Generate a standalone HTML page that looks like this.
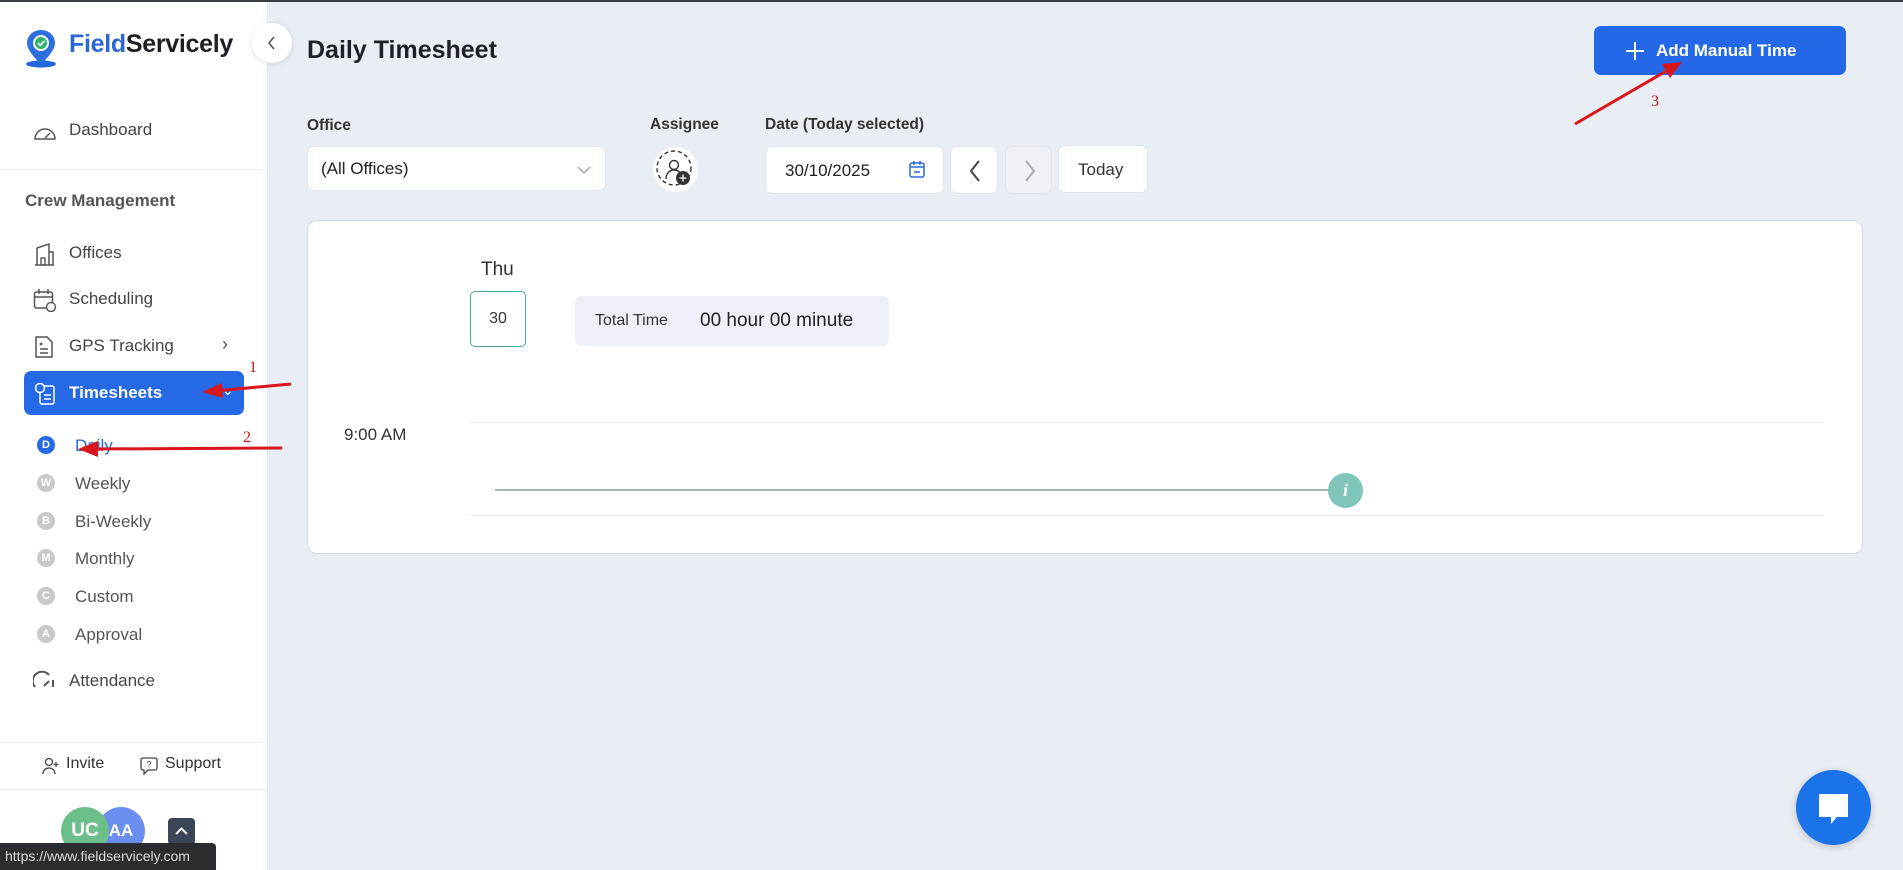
<!DOCTYPE html>
<html><head><meta charset="utf-8"><style>
*{box-sizing:border-box;margin:0;padding:0}
body{width:1903px;height:870px;overflow:hidden;background:#e9eef5;font-family:"Liberation Sans",sans-serif;position:relative;color:#222}
.abs{position:absolute}
#topbar{left:0;top:0;width:1903px;height:2px;background:#3a3d44}
#side{left:0;top:2px;width:268px;height:868px;background:#fff;border-right:1px solid #e3e8ee}
.nav{position:absolute;left:69px;font-size:17px;color:#444;white-space:nowrap}
.ic{position:absolute;left:33px}
.sub{position:absolute;left:75px;font-size:17px;color:#555}
.dot{position:absolute;left:37px;width:18px;height:18px;border-radius:50%;background:#c9c9cc;color:#fff;font-size:11px;font-weight:bold;text-align:center;line-height:18px}
.lbl{position:absolute;font-size:15.5px;color:#333;font-weight:bold}
.box{position:absolute;background:#fff;border:1px solid #e1e6ec;border-radius:7px}
</style></head><body>
<div id="topbar" class="abs"></div>
<div id="side" class="abs">
  <svg class="abs" style="left:24px;top:26px" width="34" height="40" viewBox="0 0 34 40">
    <ellipse cx="17" cy="36" rx="15" ry="3.5" fill="#2466db"/>
    <path d="M17 2C9 2 3 8 3 15c0 9 14 21 14 21s14-12 14-21C31 8 25 2 17 2z" fill="#2b6fe0"/>
    <circle cx="17" cy="15" r="8" fill="#fff"/><circle cx="17" cy="15" r="6" fill="#2fb36b"/>
    <path d="M14 15l2.2 2.2L20.5 13" stroke="#fff" stroke-width="1.8" fill="none"/>
  </svg>
  <div class="abs" style="left:69px;top:28px;font-size:25px;font-weight:bold;letter-spacing:-0.3px"><span style="color:#2b68d6">Field</span><span style="color:#1d1f24">Servicely</span></div>

  <svg class="ic" style="top:120px" width="24" height="20" viewBox="0 0 24 20"><path d="M2 17a10 10 0 0 1 20 0z" fill="none" stroke="#555" stroke-width="1.5"/><path d="M12 16l5-5" stroke="#555" stroke-width="1.5"/></svg>
  <div class="nav" style="top:118px">Dashboard</div>
  <div class="abs" style="left:0;top:167px;width:268px;height:1px;background:#e8ebef"></div>
  <div class="abs" style="left:25px;top:189px;font-size:17px;color:#555;font-weight:bold">Crew Management</div>

  <svg class="ic" style="top:240px" width="22" height="24" viewBox="0 0 22 24"><path d="M2 23h19M4 23V6l12-4v21M16 10h4v13" fill="none" stroke="#555" stroke-width="1.5"/><rect x="8" y="16" width="4" height="7" fill="none" stroke="#555" stroke-width="1.4"/></svg>
  <div class="nav" style="top:241px">Offices</div>
  <svg class="ic" style="top:286px" width="24" height="24" viewBox="0 0 24 24"><rect x="1.5" y="4" width="18" height="16" rx="2" fill="none" stroke="#555" stroke-width="1.5"/><path d="M1.5 9h18M6 1v5M15 1v5" stroke="#555" stroke-width="1.5"/><circle cx="18" cy="19" r="4.5" fill="#fff" stroke="#555" stroke-width="1.4"/></svg>
  <div class="nav" style="top:287px">Scheduling</div>
  <svg class="ic" style="top:333px" width="22" height="24" viewBox="0 0 22 24"><path d="M3 2h11l5 5v15H3z" fill="none" stroke="#555" stroke-width="1.5"/><path d="M7 14h8M7 18h8" stroke="#555" stroke-width="1.5"/><circle cx="8" cy="9" r="1.4" fill="#555"/></svg>
  <div class="nav" style="top:334px">GPS Tracking</div>
  <div class="abs" style="left:222px;top:332px;font-size:18px;color:#555">›</div>

  <div class="abs" style="left:24px;top:369px;width:220px;height:44px;background:#2569e6;border-radius:7px"></div>
  <svg class="abs" style="left:34px;top:380px" width="22" height="24" viewBox="0 0 22 24"><rect x="6" y="4" width="14" height="18" rx="2" fill="none" stroke="#fff" stroke-width="1.5"/><circle cx="6" cy="6" r="4.5" fill="#2569e6" stroke="#fff" stroke-width="1.5"/><path d="M10 13h7M10 17h7" stroke="#fff" stroke-width="1.5"/></svg>
  <div class="nav" style="top:381px;color:#fff;font-weight:bold">Timesheets</div>
  <div class="abs" style="left:222px;top:380px;font-size:14px;color:#fff">⌄</div>

  <div class="dot" style="top:434px;background:#2569e6">D</div><div class="sub" style="top:434px;color:#2b68d6">Daily</div>
  <div class="dot" style="top:472px">W</div><div class="sub" style="top:472px">Weekly</div>
  <div class="dot" style="top:510px">B</div><div class="sub" style="top:510px">Bi-Weekly</div>
  <div class="dot" style="top:547px">M</div><div class="sub" style="top:547px">Monthly</div>
  <div class="dot" style="top:585px">C</div><div class="sub" style="top:585px">Custom</div>
  <div class="dot" style="top:623px">A</div><div class="sub" style="top:623px">Approval</div>
  <svg class="ic" style="top:668px" width="22" height="20" viewBox="0 0 22 20"><path d="M2 17A9 9 0 0 1 16 5" fill="none" stroke="#555" stroke-width="2"/><path d="M20 10v7M11 16l5-5" stroke="#555" stroke-width="2"/></svg>
  <div class="nav" style="top:669px">Attendance</div>

  <div class="abs" style="left:0;top:740px;width:268px;height:1px;background:#eceff3;box-shadow:0 -2px 4px rgba(0,0,0,0.04)"></div>
  <svg class="abs" style="left:42px;top:755px" width="18" height="18" viewBox="0 0 18 18"><circle cx="7" cy="5" r="3.5" fill="none" stroke="#444" stroke-width="1.3"/><path d="M1 17c0-4 3-6 6-6s6 2 6 6M14 5v5M11.5 7.5h5" fill="none" stroke="#444" stroke-width="1.3"/></svg>
  <div class="abs" style="left:66px;top:753px;font-size:16px;color:#333">Invite</div>
  <svg class="abs" style="left:140px;top:754px" width="18" height="19" viewBox="0 0 18 19"><path d="M3 2h12a2 2 0 0 1 2 2v8a2 2 0 0 1-2 2H8l-4 4v-4H3a2 2 0 0 1-2-2V4a2 2 0 0 1 2-2z" fill="none" stroke="#444" stroke-width="1.3"/><text x="9" y="11.5" font-size="9" text-anchor="middle" fill="#444" font-family="Liberation Sans">?</text></svg>
  <div class="abs" style="left:165px;top:753px;font-size:16px;color:#333">Support</div>
  <div class="abs" style="left:0;top:787px;width:268px;height:1px;background:#eef1f4"></div>

  <div class="abs" style="left:97px;top:805px;width:48px;height:48px;border-radius:50%;background:#6b8ff0;color:#fff;font-weight:bold;font-size:17px;text-align:center;line-height:48px">AA</div>
  <div class="abs" style="left:61px;top:805px;width:48px;height:48px;border-radius:50%;background:#6cbf8a;color:#fff;font-weight:bold;font-size:19px;text-align:center;line-height:48px">UC</div>
  <div class="abs" style="left:168px;top:816px;width:27px;height:27px;border-radius:4px;background:#3b4658"><svg width="27" height="27"><path d="M8 16l5.5-5.5L19 16" fill="none" stroke="#fff" stroke-width="2"/></svg></div>
</div>
<div class="abs" style="left:0;top:843px;width:216px;height:27px;background:#2b2c2f;border-radius:0 4px 0 0;color:#ddd;font-size:14px;line-height:27px;padding-left:5px">https://www.fieldservicely.com</div>

<div class="abs" style="left:252px;top:23px;width:40px;height:40px;border-radius:50%;background:#fff;box-shadow:0 1px 6px rgba(0,0,0,0.12)"><svg width="40" height="40"><path d="M22 14l-5 6 5 6" fill="none" stroke="#555" stroke-width="1.6"/></svg></div>

<div class="abs" style="left:307px;top:36px;font-size:25px;font-weight:bold;color:#1e2228">Daily Timesheet</div>
<div class="abs" style="left:1594px;top:26px;width:252px;height:49px;background:#2468e8;border-radius:7px;color:#fff;font-weight:bold;font-size:17px;line-height:49px">
  <svg class="abs" style="left:31px;top:15px" width="20" height="20"><path d="M10 1v18M1 10h18" stroke="#fff" stroke-width="2"/></svg>
  <span class="abs" style="left:62px">Add Manual Time</span></div>

<div class="lbl" style="left:307px;top:117px">Office</div>
<div class="box" style="left:307px;top:146px;width:299px;height:45px"><span class="abs" style="left:13px;top:12px;font-size:17px;color:#222">(All Offices)</span><svg class="abs" style="left:268px;top:17px" width="16" height="12"><path d="M2 3l6 6 6-6" fill="none" stroke="#aaa" stroke-width="1.5"/></svg></div>
<div class="lbl" style="left:650px;top:116px">Assignee</div>
<div class="abs" style="left:653px;top:147px;width:45px;height:45px;border-radius:50%;background:#fff"><svg width="45" height="45"><circle cx="21" cy="21" r="17" fill="none" stroke="#333" stroke-width="1.4" stroke-dasharray="4 3"/><circle cx="21" cy="18" r="4.5" fill="none" stroke="#333" stroke-width="1.4"/><path d="M13 32c0-6 4-9 8-9s6 2 7 4" fill="none" stroke="#333" stroke-width="1.4"/><circle cx="30" cy="31" r="7" fill="#333"/><path d="M30 27.5v7M26.5 31h7" stroke="#fff" stroke-width="1.3"/></svg></div>
<div class="lbl" style="left:765px;top:116px">Date (Today selected)</div>
<div class="box" style="left:765px;top:146px;width:179px;height:48px"><span class="abs" style="left:19px;top:14px;font-size:17px;color:#222">30/10/2025</span><svg class="abs" style="left:142px;top:12px" width="18" height="20"><rect x="2" y="4" width="14" height="14" rx="2" fill="none" stroke="#2b68d6" stroke-width="1.5"/><path d="M2 8h14M6 2v4M12 2v4M6 13h6" stroke="#2b68d6" stroke-width="1.5"/></svg></div>
<div class="box" style="left:950px;top:146px;width:48px;height:48px"><svg width="48" height="48"><path d="M28 14l-8 10 8 10" fill="none" stroke="#444" stroke-width="2"/></svg></div>
<div class="box" style="left:1005px;top:146px;width:47px;height:48px;background:#eef2f7"><svg width="48" height="48"><path d="M20 14l8 10-8 10" fill="none" stroke="#aaa" stroke-width="2"/></svg></div>
<div class="box" style="left:1058px;top:145px;width:90px;height:48px"><span class="abs" style="left:19px;top:14px;font-size:17px;color:#333">Today</span></div>

<div class="abs" style="left:307px;top:220px;width:1556px;height:334px;background:#fff;border:1px solid #d3dbe3;border-radius:10px"></div>
<div class="abs" style="left:481px;top:259px;font-size:19px;color:#333">Thu</div>
<div class="abs" style="left:470px;top:291px;width:56px;height:56px;border:1px solid #4aa99a;border-radius:5px;text-align:center;line-height:54px;font-size:16px;color:#333">30</div>
<div class="abs" style="left:575px;top:296px;width:314px;height:50px;background:#edf0f8;border-radius:7px"><span class="abs" style="left:20px;top:16px;font-size:16px;color:#333">Total Time</span><span class="abs" style="left:125px;top:14px;font-size:19px;color:#222">00 hour 00 minute</span></div>
<div class="abs" style="left:468px;top:422px;width:1356px;height:1px;background:#edf0f3"></div>
<div class="abs" style="left:468px;top:515px;width:1356px;height:1px;background:#edf0f3"></div>
<div class="abs" style="left:344px;top:425px;font-size:17px;color:#333">9:00 AM</div>
<div class="abs" style="left:495px;top:489px;width:835px;height:2px;background:#a4bcb9"></div>
<div class="abs" style="left:1328px;top:473px;width:35px;height:35px;border-radius:50%;background:#80c5b9;color:#fff;font-family:'Liberation Serif',serif;font-style:italic;font-weight:bold;font-size:18px;text-align:center;line-height:35px">i</div>

<div class="abs" style="left:1796px;top:770px;width:75px;height:75px;border-radius:50%;background:#1a73e8;box-shadow:0 2px 8px rgba(0,0,0,0.2)"><svg width="75" height="75"><path d="M23 24h29v23H41l-6 7v-7H23z" fill="#fff"/></svg></div>

<svg class="abs" style="left:0;top:0" width="1903" height="870">
  <g stroke="#d9161c" stroke-width="3" fill="#d9161c">
    <line x1="291" y1="384" x2="215" y2="391"/><polygon points="202,392 222,383 223,398" stroke="none"/>
    <line x1="282" y1="448" x2="92" y2="449"/><polygon points="78,449 98,441 98,457" stroke="none"/>
    <line x1="1575" y1="124" x2="1668" y2="70"/><polygon points="1682,62 1662,64 1670,78" stroke="none"/>
  </g>
  <g fill="#c8161c" font-family="Liberation Serif" font-size="16">
    <text x="249" y="372">1</text><text x="243" y="442">2</text><text x="1651" y="106">3</text>
  </g>
</svg>
</body></html>
